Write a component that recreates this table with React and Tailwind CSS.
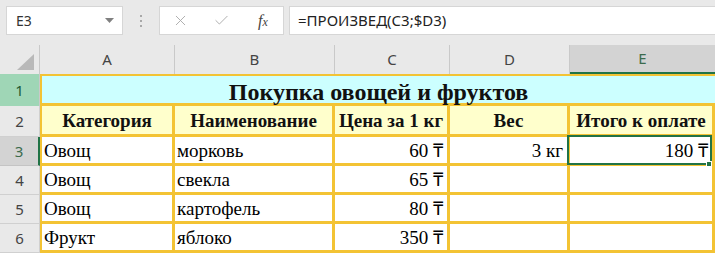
import React from 'react';
import { X, Check } from 'lucide-react';

const columns = ['A', 'B', 'C', 'D', 'E'];

const headers = ['Категория', 'Наименование', 'Цена за 1 кг', 'Вес', 'Итого к оплате'];

const rows = [
    ['Овощ', 'морковь', '60 ₸', '3 кг', '180 ₸'],
    ['Овощ', 'свекла', '65 ₸', '', ''],
    ['Овощ', 'картофель', '80 ₸', '', ''],
    ['Фрукт', 'яблоко', '350 ₸', '', ''],
];

const FormulaBar = () => (
    <div className="h-[45px] bg-[#e9e9e9] flex items-start pt-[6px] pl-[6px]">
        {/* Name box */}
        <div className="w-[117px] h-[29px] bg-white border border-[#d6d6d6] flex items-center justify-between pl-[9px] pr-[8px]">
            <span className="text-[14px] text-[#333]">E3</span>
            <svg width="9" height="6" viewBox="0 0 9 6">
                <polygon points="0,0 9,0 4.5,5" fill="#808080" />
            </svg>
        </div>

        {/* Splitter dots */}
        <div className="w-[36px] h-[29px] flex flex-col items-center justify-center gap-[3px]">
            <span className="w-[2px] h-[2px] bg-[#a8a8a8]" />
            <span className="w-[2px] h-[2px] bg-[#a8a8a8]" />
            <span className="w-[2px] h-[2px] bg-[#a8a8a8]" />
        </div>

        {/* Cancel / enter / insert function */}
        <div className="w-[125px] h-[29px] bg-white border border-[#d6d6d6] flex items-center pl-[12px]">
            <X size={17} strokeWidth={1.3} className="text-[#a9a9a9]" />
            <Check size={17} strokeWidth={1.3} className="text-[#a9a9a9] ml-[24px]" />
            <span className="ml-[28px] font-['Liberation_Serif'] italic text-[16px] text-[#444] leading-none">
                f<span className="text-[12px]">x</span>
            </span>
        </div>

        {/* Formula input */}
        <div className="flex-1 ml-[5px] h-[29px] bg-white border border-[#d6d6d6] border-r-0 flex items-center pl-[8px]">
            <span className="text-[15px] text-[#222]">=ПРОИЗВЕД(C3;$D3)</span>
        </div>
    </div>
);

const Sheet = () => (
    <div className="grid grid-cols-[40px_135px_160px_115px_120px_145px] grid-rows-[29px_32px_31px_29px_29px_29px_29px] font-['Liberation_Serif'] text-[19px] text-black">
        {/* Select-all corner */}
        <div className="bg-[#e9e9e9] border-r border-[#c9c9c9] flex items-end justify-end pr-[5px] pb-[4px]">
            <svg width="17" height="16" viewBox="0 0 17 16">
                <polygon points="17,0 17,16 0,16" fill="#b9b9b9" />
            </svg>
        </div>

        {/* Column headers */}
        {columns.map((c) =>
            c === 'E' ? (
                <div key={c} className="bg-[#d3d3d3] border-b-2 border-[#217346] flex items-center justify-center font-['Noto_Sans'] text-[15px] text-[#3b6b4d]">
                    {c}
                </div>
            ) : (
                <div key={c} className="bg-[#e9e9e9] border-r border-[#c9c9c9] flex items-center justify-center font-['Noto_Sans'] text-[15px] text-[#444]">
                    {c}
                </div>
            )
        )}

        {/* Row 1: merged title */}
        <div className="bg-[#9fd6b6] border-r border-[#c9c9c9] flex items-center justify-center font-['Noto_Sans'] text-[15px] text-[#1d5a34]">
            1
        </div>
        <div className="col-span-5 bg-[#ccffff] border-t-2 border-l-2 border-b-[3px] border-[#f3c334] flex items-center justify-center pt-[4px] font-bold text-[24px] text-[#111]">
            Покупка овощей и фруктов
        </div>

        {/* Row 2: column titles */}
        <div className="bg-[#e9e9e9] border-r border-b border-[#d0d0d0] flex items-center justify-center font-['Noto_Sans'] text-[15px] text-[#444]">
            2
        </div>
        {headers.map((h, i) => (
            <div
                key={h}
                className={`bg-[#ffffcc] border-r-[3px] border-b-[3px] border-[#f3c334] flex items-center justify-center pt-[3px] font-bold text-[19px] text-[#111] whitespace-nowrap ${i === 0 ? 'border-l-2' : ''}`}
            >
                {h}
            </div>
        ))}

        {/* Data rows */}
        {rows.map((row, r) => (
            <React.Fragment key={r}>
                <div
                    className={`border-r border-b flex items-center justify-center font-['Noto_Sans'] text-[15px] ${r === 0 ? 'bg-[#d3d3d3] border-r-2 border-r-[#217346] border-b-[#c4c4c4] text-[#3b6b4d]' : 'bg-[#e9e9e9] border-[#d0d0d0] text-[#444]'}`}
                >
                    {r + 3}
                </div>
                {row.map((v, i) => (
                    <div
                        key={i}
                        className={`relative bg-white border-r-[3px] border-b-[3px] border-[#f3c334] flex items-center pt-[2px] whitespace-nowrap ${i === 0 ? 'border-l-2' : ''} ${i < 2 ? 'justify-start pl-[2px]' : 'justify-end pr-[4px]'}`}
                    >
                        {v}
                        {r === 0 && i === 4 && (
                            <>
                                <span className="absolute -inset-y-[2px] -left-[3px] right-0 border-2 border-[#217346]" />
                                <span className="absolute -bottom-[4px] right-0 w-[6px] h-[6px] bg-[#217346] border border-white" />
                            </>
                        )}
                    </div>
                ))}
            </React.Fragment>
        ))}
    </div>
);

export default function App() {
    return (
        <div className="w-[715px] h-[253px] overflow-hidden bg-white font-['Noto_Sans']">
            <FormulaBar />
            <Sheet />
        </div>
    );
}
